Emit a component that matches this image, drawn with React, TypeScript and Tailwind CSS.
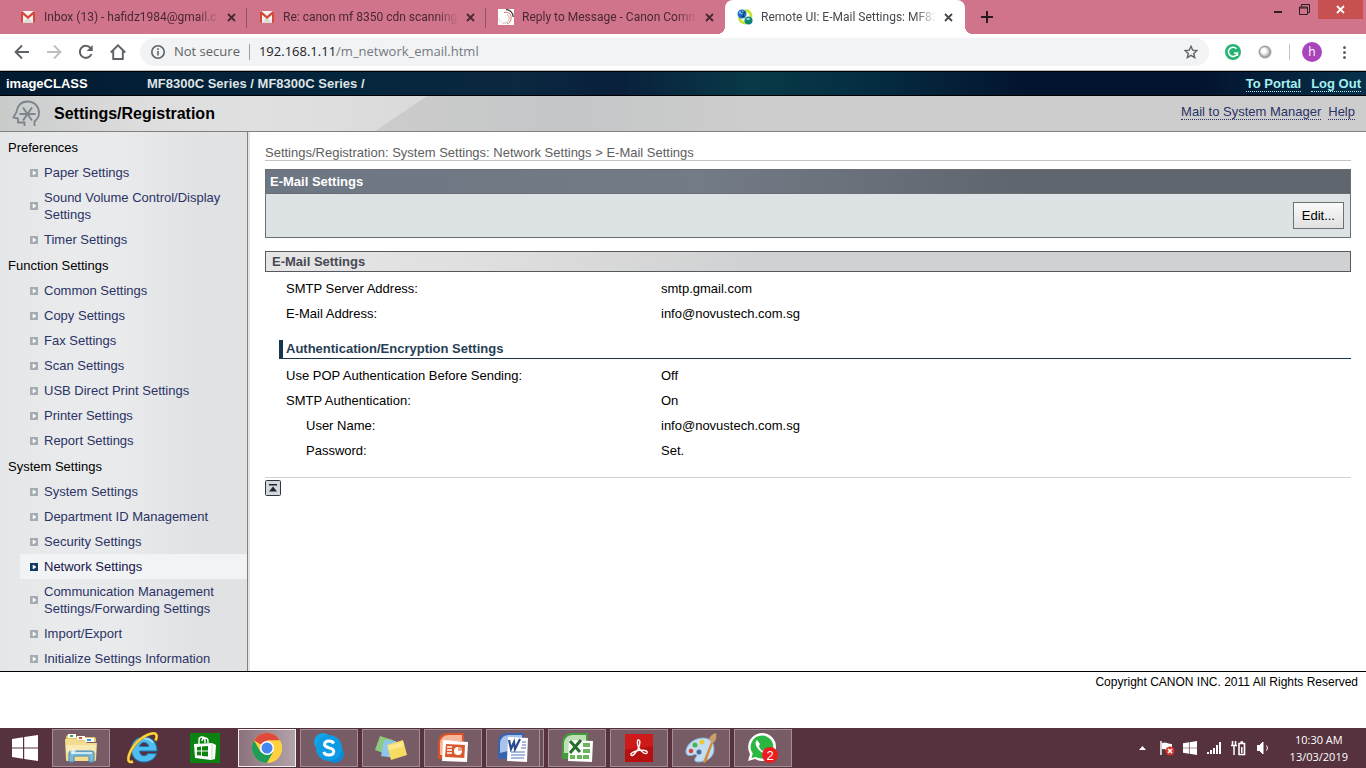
import type { ReactNode } from 'react';

interface NavItem {
  label: string;
  active?: boolean;
}

interface NavGroup {
  title: string;
  items: NavItem[];
}

interface SettingRow {
  label: string;
  value: string;
  nested?: boolean;
}

const navGroups: NavGroup[] = [
  {
    title: 'Preferences',
    items: [
      { label: 'Paper Settings' },
      { label: 'Sound Volume Control/Display Settings' },
      { label: 'Timer Settings' },
    ],
  },
  {
    title: 'Function Settings',
    items: [
      { label: 'Common Settings' },
      { label: 'Copy Settings' },
      { label: 'Fax Settings' },
      { label: 'Scan Settings' },
      { label: 'USB Direct Print Settings' },
      { label: 'Printer Settings' },
      { label: 'Report Settings' },
    ],
  },
  {
    title: 'System Settings',
    items: [
      { label: 'System Settings' },
      { label: 'Department ID Management' },
      { label: 'Security Settings' },
      { label: 'Network Settings', active: true },
      { label: 'Communication Management Settings/Forwarding Settings' },
      { label: 'Import/Export' },
      { label: 'Initialize Settings Information' },
    ],
  },
];

const emailRows: SettingRow[] = [
  { label: 'SMTP Server Address:', value: 'smtp.gmail.com' },
  { label: 'E-Mail Address:', value: 'info@novustech.com.sg' },
];

const authRows: SettingRow[] = [
  { label: 'Use POP Authentication Before Sending:', value: 'Off' },
  { label: 'SMTP Authentication:', value: 'On' },
  { label: 'User Name:', value: 'info@novustech.com.sg', nested: true },
  { label: 'Password:', value: 'Set.', nested: true },
];

/* ---------- favicons ---------- */

function GmailIcon() {
  return (
    <svg width="14" height="12" viewBox="0 0 14 12">
      <rect width="14" height="12" rx="1" fill="#f3f1ee" />
      <path d="M2 12 7 6l5 6z" fill="#dedad6" />
      <path d="M0 1.2C0 .4.8 0 1.5.3L7 5 12.500.3C13.200 0 14 .4 14 1.200V11q0 1-1 1h-1V3.800L7 8 2 3.800V12H1q-1 0-1-1z" fill="#d5483b" />
    </svg>
  );
}

function CanonIcon() {
  return (
    <svg width="16" height="16" viewBox="0 0 16 16" fill="none">
      <rect width="16" height="16" fill="#fff" />
      <path d="M8 .7C12 .7 15.300 4 15.300 8" stroke="#333" strokeWidth="1.200" />
      <path d="M6 3.500c5-1 8 2 7 7-.5 2-2 4-4 4.500" stroke="#e0766f" />
      <path d="M9 5.500c2 1 2.500 3 2 5S9 14.500 5 14" stroke="#c9a5a2" />
      <path d="M.8 9c.5 3 2 5 4.500 6" stroke="#ccc" strokeWidth=".7" />
    </svg>
  );
}

function RemoteIcon() {
  return (
    <svg width="16" height="16" viewBox="0 0 16 16" fill="none">
      <path d="M8 2c4-1 6 2 6 6M3 8c-1 4 2 6 6 6" stroke="#c3e534" strokeWidth="3" />
      <circle cx="5" cy="5" r="4.500" fill="#1d6fc4" />
      <path d="M2 3c2-2 4-1 5 0S5 6 4 5 2 5 2 3z" fill="#7cc3f3" />
      <circle cx="11.500" cy="11.500" r="4" fill="#0f8577" />
      <path d="M9 10c2-2 4-1 4 0s-3 2-4 0z" fill="#77d6c4" />
      <path d="m4 2 1 2 3-1-2 3 1 2-3-1" stroke="#0c3b77" />
    </svg>
  );
}

function CloseGlyph() {
  return (
    <svg width="9" height="9" viewBox="0 0 9 9">
      <path d="m1 1 7 7M8 1 1 8" stroke="currentColor" strokeWidth="1.800" />
    </svg>
  );
}

/* ---------- browser chrome ---------- */

interface TabProps {
  icon: ReactNode;
  title: string;
  active?: boolean;
  divider?: boolean;
}

function Tab({ icon, title, active, divider }: TabProps) {
  return (
    <div
      className={
        active
          ? 'relative flex h-full w-60 min-w-0 items-center rounded-t-lg bg-white pr-3 pl-3 text-[#45494d]'
          : 'relative flex h-full w-[239px] min-w-0 items-center pr-[11px] pl-3 text-[#4a2734]'
      }
    >
      {active && (
        <>
          <span className="absolute bottom-0 -left-2 size-2 bg-[radial-gradient(circle_at_0_0,#cf748a_8px,#fff_8px)]" />
          <span className="absolute -right-2 bottom-0 size-2 bg-[radial-gradient(circle_at_100%_0,#cf748a_8px,#fff_8px)]" />
        </>
      )}
      <span className="flex w-4 shrink-0 justify-center">{icon}</span>
      <span className="ml-2 flex-1 overflow-hidden mask-r-from-88% mask-r-to-100% font-[Roboto,sans-serif] text-xs whitespace-nowrap">{title}</span>
      <button type="button" aria-label="Close tab" className="ml-2 shrink-0">
        <CloseGlyph />
      </button>
      {divider && <span className="absolute top-2 right-0 h-5 w-px bg-[#8f5364]" />}
    </div>
  );
}

function TabStrip() {
  return (
    <div className="flex h-[34px] bg-[#cf748a] pl-2">
      <Tab icon={<GmailIcon />} title="Inbox (13) - hafidz1984@gmail.c" divider />
      <Tab icon={<GmailIcon />} title="Re: canon mf 8350 cdn scanning" divider />
      <Tab icon={<CanonIcon />} title="Reply to Message - Canon Comm" />
      <Tab icon={<RemoteIcon />} title="Remote UI: E-Mail Settings: MF83" active />
      <button type="button" aria-label="New tab" className="ml-4 text-[#2a1a20]">
        <svg width="12" height="12" viewBox="0 0 12 12">
          <path d="M6 0v12M0 6h12" stroke="currentColor" strokeWidth="2" />
        </svg>
      </button>
      <div className="mr-[3px] ml-auto flex h-[19px] items-center text-[#2f1d24]">
        <button type="button" aria-label="Minimize" className="flex h-full w-6 items-end justify-center pb-[6px]">
          <span className="h-[2px] w-2 bg-current" />
        </button>
        <button type="button" aria-label="Restore" className="flex w-7 justify-center">
          <svg width="11" height="11" viewBox="0 0 11 11" fill="none" stroke="currentColor">
            <path d="M2.500 2.500V.5h8v8h-2M.5 3h8v7.500h-8zM.5 4h8" />
          </svg>
        </button>
        <button type="button" aria-label="Close" className="flex h-full w-[45px] items-center justify-center bg-[#c75050] text-white">
          <CloseGlyph />
        </button>
      </div>
    </div>
  );
}

function Toolbar() {
  return (
    <div className="flex h-[37px] items-center border-b border-[#bcbcbc] bg-white pr-[18px] pl-[14px] text-[#5f6368]">
      <div className="flex items-center gap-4">
        <button type="button" aria-label="Back">
          <svg width="16" height="16" viewBox="0 0 16 16" fill="none" stroke="currentColor" strokeWidth="1.900">
            <path d="M15 8H2M8 1.500 1.600 8 8 14.500" />
          </svg>
        </button>
        <button type="button" aria-label="Forward" className="text-[#bdbfc1]">
          <svg width="16" height="16" viewBox="0 0 16 16" fill="none" stroke="currentColor" strokeWidth="1.900">
            <path d="M1 8h13M8 1.500 14.400 8 8 14.500" />
          </svg>
        </button>
        <button type="button" aria-label="Reload">
          <svg width="16" height="16" viewBox="0 0 16 16" fill="none" stroke="currentColor" strokeWidth="2">
            <path d="M13.500 10A6 6 0 1 1 12.500 4L14 5.500" />
            <path d="M14.700 1v6H8.700z" fill="currentColor" stroke="none" />
          </svg>
        </button>
        <button type="button" aria-label="Home">
          <svg width="16" height="16" viewBox="0 0 16 16" fill="none" stroke="currentColor" strokeWidth="1.900">
            <path d="M.8 8.500 8 1.300l7.200 7.200M3.200 7v8h9.600V7" />
          </svg>
        </button>
      </div>
      <div className="ml-[14px] flex h-7 flex-1 items-center rounded-full bg-[#f1f3f4] pr-[11px] pl-[11px] text-[13px]">
        <svg width="14" height="14" viewBox="0 0 14 14" fill="none" stroke="currentColor" strokeWidth="1.600">
          <circle cx="7" cy="7" r="6.200" />
          <path d="M7 6v4.500M7 3.300v1.600" />
        </svg>
        <span className="ml-[9px] whitespace-nowrap">Not secure</span>
        <span className="mx-[9px] h-4 w-px bg-[#9aa0a6]" />
        <div className="flex-1 text-[#757a7f]">
          <span className="text-[#202124]">192.168.1.11</span>/m_network_email.html
        </div>
        <button type="button" aria-label="Bookmark this page">
          <svg width="14" height="14" viewBox="0 0 14 14" fill="none" stroke="currentColor" strokeWidth="1.400">
            <path d="m7 1.300 1.700 3.900 4.200.4-3.200 2.800 1 4.200L7 10.400l-3.700 2.200 1-4.200L1.100 5.600l4.200-.4z" />
          </svg>
        </button>
      </div>
      <div className="ml-4 flex items-center">
        <svg width="16" height="16" viewBox="0 0 16 16">
          <circle cx="8" cy="8" r="8" fill="#27b376" />
          <path d="M11.500 4.800A4.600 4.600 0 1 0 12.500 9H9M12.400 9v3" fill="none" stroke="#fff" strokeWidth="1.500" />
        </svg>
        <svg width="14" height="14" viewBox="0 0 14 14" className="ml-[17px]">
          <circle cx="7" cy="7" r="6.500" fill="#a3a3a3" />
          <circle cx="6.500" cy="6.500" r="4.600" fill="#d2d2d2" />
          <circle cx="6" cy="6" r="3" fill="#fff" />
        </svg>
        <span className="mr-3 ml-[17px] h-4 w-px bg-[#c4c6c8]" />
        <button type="button" aria-label="Profile" className="flex size-5 items-center justify-center rounded-full bg-[#a845bb] text-xs leading-none text-white">
          h
        </button>
        <button type="button" aria-label="Menu" className="ml-[19px] flex flex-col gap-[2px] px-[2px]">
          <span className="size-[3px] rounded-full bg-current" />
          <span className="size-[3px] rounded-full bg-current" />
          <span className="size-[3px] rounded-full bg-current" />
        </button>
      </div>
    </div>
  );
}

/* ---------- remote UI page ---------- */

function DeviceBar() {
  return (
    <div className="flex h-[25px] items-center border-y border-black bg-[linear-gradient(90deg,#021a30_0%,#04263d_25%,#0a2840_38%,#0a1f3c_45%,#083946_55%,#052e42_63%,#03142e_75%,#03142e_88%,#08304a_100%)] pr-[5px] pl-[6px] text-[13px] font-bold">
      <span className="w-[141px] text-white">imageCLASS</span>
      <span className="text-[#dfe3e6]">MF8300C Series / MF8300C Series /</span>
      <div className="ml-auto flex gap-[10px] leading-[15px] text-[#a5f0f2]">
        <a href="#portal" className="border-b border-dotted border-[#a5f0f2]">To Portal</a>
        <a href="#logout" className="border-b border-dotted border-[#a5f0f2]">Log Out</a>
      </div>
    </div>
  );
}

function PageHeader() {
  return (
    <div className="relative flex h-9 items-center border-b border-[#808080] bg-[linear-gradient(90deg,#c9caca_0px,#dedede_150px,#e0e0e0_260px,#dadada_430px)] pr-[11px] pl-3">
      <div className="absolute inset-y-0 right-0 left-[375px] bg-[linear-gradient(90deg,#cccccc_0px,#c4c6c7_190px,#cdcdcd_380px)] [clip-path:polygon(0_100%,52px_0,100%_0,100%_100%)]" />
      <svg width="28" height="27" viewBox="0 0 28 27" fill="none" stroke="#7b858c" strokeWidth="1.800" className="relative">
        <path d="M12.500 26v-3.500H6V18.500L1.500 17.500 4.500 12C5 6 9 1.500 15.500 1.500c7 0 11.500 5 11.500 11.500 0 4-1.500 6-4.500 8.500V26" />
        <path d="M7.500 14h16M11 7.500l9 13M20 7.500l-9 13" strokeWidth="2" />
      </svg>
      <h1 className="relative ml-[14px] text-base font-bold">Settings/Registration</h1>
      <div className="relative mb-[2px] ml-auto flex gap-[7px] text-[13px] leading-[14px] text-[#2b3366]">
        <a href="#mail" className="border-b border-dotted border-[#2b3366]">Mail to System Manager</a>
        <a href="#help" className="border-b border-dotted border-[#2b3366]">Help</a>
      </div>
    </div>
  );
}

function Sidebar() {
  return (
    <nav className="w-[248px] shrink-0 border-r border-[#808080] bg-[linear-gradient(90deg,#e4e6e8_0px,#e9eaeb_60px,#e9eaeb_120px,#e0e2e4_200px,#e0e2e4_247px)] pt-[2px] leading-[17px]">
      {navGroups.map((group) => (
        <section key={group.title}>
          <h2 className="h-[26px] pt-[5px] pl-2 text-black">{group.title}</h2>
          <ul className="pl-5">
            {group.items.map((item) => (
              <li key={item.label} className={item.active ? 'bg-[#f2f3f5]' : ''}>
                <a
                  href="#settings"
                  className={
                    item.active
                      ? 'flex items-center gap-[6px] py-1 pr-4 pl-[10px] text-[#15154a]'
                      : 'flex items-center gap-[6px] py-1 pr-4 pl-[10px] text-[#2b3366]'
                  }
                >
                  <svg width="8" height="8" viewBox="0 0 8 8" className="shrink-0">
                    <rect width="8" height="8" fill={item.active ? '#123a66' : '#a3acb1'} />
                    <path d="M3 2v4l3-2z" fill="#fff" stroke="#fff" strokeWidth=".6" />
                  </svg>
                  {item.label}
                </a>
              </li>
            ))}
          </ul>
        </section>
      ))}
    </nav>
  );
}

function SettingsTable({ rows }: { rows: SettingRow[] }) {
  return (
    <table className="w-full table-fixed text-left leading-[17px]">
      <tbody>
        {rows.map((row) => (
          <tr key={row.label}>
            <th scope="row" className={row.nested ? 'w-[396px] py-1 pl-[41px] font-normal' : 'w-[396px] py-1 pl-[21px] font-normal'}>
              {row.label}
            </th>
            <td className="py-1">{row.value}</td>
          </tr>
        ))}
      </tbody>
    </table>
  );
}

function Content() {
  return (
    <main className="min-w-0 flex-1 border-l-2 border-[#e3e5e6] bg-white pt-[13px] pr-[15px] pl-[15px]">
      <p className="border-b border-[#c4c4c4] leading-[15px] text-[#5e5e5e]">
        Settings/Registration: System Settings: Network Settings &gt; E-Mail Settings
      </p>

      <section className="mt-2 border border-[#6a6f73]">
        <h2 className="bg-[linear-gradient(90deg,#6d7683,#737b86_40%,#5f656d_70%,#5f656d)] pl-1 leading-[23px] font-bold text-white">E-Mail Settings</h2>
        <div className="flex justify-end border-t border-[#6a6f73] bg-[#dde2e5] px-[6px] py-2">
          <button type="button" className="h-[27px] border border-[#707070] bg-linear-to-b from-[#fafafa] to-[#e0e0e0] px-2 text-black">
            Edit...
          </button>
        </div>
      </section>

      <h3 className="mt-[13px] mb-1 border border-[#55585f] bg-[linear-gradient(90deg,#e6e6e6_0%,#dfdfdf_20%,#d0d1d2_45%,#d0d1d2_100%)] pl-[6px] leading-[19px] font-bold text-[#474a54]">
        E-Mail Settings
      </h3>
      <SettingsTable rows={emailRows} />

      <h4 className="mt-[14px] mb-1 ml-[14px] border-b border-l-4 border-b-[#1b3448] border-l-[#143650] pl-[3px] leading-[18px] font-bold text-[#284055]">
        Authentication/Encryption Settings
      </h4>
      <SettingsTable rows={authRows} />

      <div className="mt-[14px] border-t border-[#d0d0d0] pt-[2px]">
        <a href="#top" aria-label="Back to top" className="block size-4">
          <svg width="16" height="16" viewBox="0 0 16 16">
            <rect x=".5" y=".5" width="15" height="15" rx="1" fill="#d3d6dc" stroke="#30333f" />
            <path d="M4 4h8v1.500H4zM8 6.500l4 5H4z" fill="#20232e" />
          </svg>
        </a>
      </div>
    </main>
  );
}

/* ---------- taskbar ---------- */

function WindowsLogo({ size }: { size: number }) {
  return (
    <svg width={size} height={size} viewBox="0 0 26 26" fill="#fff">
      <path d="M0 4 11 2.300V12.400H0zM12.200 2.100 26 0v12.400H12.200zM0 13.600h11v10.100L0 22zM12.200 13.600H26V26l-13.800-2.100z" />
    </svg>
  );
}

function FolderIcon() {
  return (
    <svg width="32" height="30" viewBox="0 0 32 30">
      <path d="M1 4q0-2 2-2h7l2 2h17q2 0 2 2v3H1z" fill="#e6c768" />
      <path d="M3 1h8v4H3zM12 3h8v4h-8zM20 5h9v4h-9z" fill="#fff" />
      <path d="M5 2h3v2H5z" fill="#3fa34d" />
      <path d="M14 4h3v2h-3z" fill="#d34c3c" />
      <path d="M22 6h4v2h-4z" fill="#3d9bd5" />
      <path d="M0 6h12l2 2h6l2 2h10l-1 17q0 1-1 1H2q-1 0-1-1z" fill="#f3dc8e" />
      <path d="M1 12h30l-.5 8H1.500z" fill="#f9eab4" />
      <path d="M4 29V20q0-2 2-2h21q2 0 2 2v9h-5v-5q0-1-1-1H10q-1 0-1 1v5z" fill="#7db9da" stroke="#4a88ae" />
      <path d="M6 20h21" stroke="#c8e8f6" strokeWidth="2" />
      <path d="M8 15v6M5 18h6" stroke="#fff" />
    </svg>
  );
}

function InternetExplorerIcon() {
  return (
    <svg width="32" height="32" viewBox="0 0 32 32">
      <path
        d="M30 19H12.500c.3 3 2 4.800 4.500 4.800 1.800 0 3-.7 3.800-2.200H29.500C28 26.800 23 30 17 30 9.500 30 4.500 25 4.500 17.500S9.500 5 17 5c8 0 13 5.500 13 14zM12.600 14.500h9c-.3-2.500-2-4-4.500-4s-4.200 1.500-4.500 4z"
        fill="#4fbdf0"
        stroke="#1678b8"
      />
      <path d="M7 14c1-4 5-7.500 10-7.500 4 0 7 1.500 9 4" fill="none" stroke="#b2e5fb" strokeWidth="1.500" />
      <path d="M6 29.500c-5 2-6-2-3-9C7 11 17 3 25 1.500c5-1 5.500 3 3.500 7" fill="none" stroke="#c98d10" strokeWidth="3" />
      <path d="M6 29.500c-5 2-6-2-3-9C7 11 17 3 25 1.500c5-1 5.500 3 3.500 7" fill="none" stroke="#fbd648" strokeWidth="2" />
    </svg>
  );
}

function StoreIcon() {
  return (
    <svg width="30" height="30" viewBox="0 0 30 30">
      <rect width="30" height="30" fill="#0c8310" />
      <path d="M9 11V7q0-3 3-3t3 3v3M12 8q0-3 3-3t3 3v2" fill="none" stroke="#fff" strokeWidth="1.400" />
      <path d="m4 11 18-1 4 2-1 14-4 1-16-2z" fill="#fff" />
      <path d="M22 10v17" stroke="#a9d3aa" strokeWidth=".7" />
      <path d="m7 14 4-.4v4H7zM12 13.500l6-.5v4.600h-6zM7 18.600h4v4l-4-.4zM12 18.600h6v5l-6-.7z" fill="#0c8310" />
    </svg>
  );
}

function ChromeIcon() {
  return (
    <svg width="30" height="30" viewBox="0 0 30 30">
      <circle cx="15" cy="15" r="15" fill="#fdd13f" />
      <path d="M15 15 2 7.500A15 15 0 0 1 28 7.500H15z" fill="#e04a3a" />
      <path d="M2 7.500A15 15 0 0 0 15 30l6.500-11.300L15 22 8.500 18.800z" fill="#1f9d58" />
      <path d="M15 7.500h13A15 15 0 0 1 15 30l6.500-11.300z" fill="#fdd13f" />
      <circle cx="15" cy="15" r="7" fill="#fff" />
      <circle cx="15" cy="15" r="5.500" fill="#4587f0" />
    </svg>
  );
}

function SkypeIcon() {
  return (
    <svg width="30" height="30" viewBox="0 0 30 30">
      <circle cx="9" cy="9" r="9" fill="#12a5ea" />
      <circle cx="21" cy="21" r="9" fill="#0a8ad8" />
      <circle cx="15" cy="15" r="13" fill="#0f9be4" />
      <path d="M19.800 10.500c-1-2-3-2.500-5-2.500-2.500 0-4.300 1.200-4.300 3.300 0 4.700 9.200 2.400 9.200 7 0 2.400-2 3.700-4.700 3.700-2.400 0-4.600-1-5.200-3.200" fill="none" stroke="#fff" strokeWidth="3" />
    </svg>
  );
}

function NotesIcon() {
  return (
    <svg width="32" height="26" viewBox="0 0 32 26">
      <path d="m5 1 13 4-4 15L0 15z" fill="#8ccb7f" />
      <path d="m9 5 12 1-1 17-14-2z" fill="#8fc6ee" />
      <path d="m12 10 16-5 4 15-16 5z" fill="#f7dc63" />
      <path d="m13 11 15-4 1 4-15 4z" fill="#fbe991" />
    </svg>
  );
}

function PowerPointIcon() {
  return (
    <svg width="31" height="30" viewBox="0 0 31 30">
      <path d="M0 26V9Q1 0 10 0h16v26z" fill="#d5532a" />
      <path d="M2 22V10Q3 2 11 2h13v6H8v14z" fill="#f5b79b" />
      <path d="m5 7 25 2-1 20-25-1z" fill="#fff" />
      <path d="m8 11 19 1-.7 13L7 24z" fill="#d9582e" />
      <circle cx="20" cy="18" r="4" fill="#fff" />
      <path d="M20 18v-4a4 4 0 0 1 4 4z" fill="#f3a487" />
      <path d="M9 14h5M9 17h5M9 20h5" stroke="#fff" strokeWidth="1.500" />
    </svg>
  );
}

function WordIcon() {
  return (
    <svg width="31" height="30" viewBox="0 0 31 30">
      <path d="M0 26V9Q1 0 10 0h16v26z" fill="#3a63ad" />
      <path d="M2 20V10Q3 2 11 2h13v4H10v12z" fill="#a9c2ea" />
      <path d="m10 4 20 1-1 24-20-1z" fill="#fff" />
      <path d="M24 9h4M24 12h4M23 15h5M13 19h14M13 22h14M13 25h13" stroke="#5579bb" strokeWidth="1.200" />
      <path d="m11 7 2 9 3-7 1 7 5-10" fill="none" stroke="#2a4b91" strokeWidth="2.200" />
    </svg>
  );
}

function ExcelIcon() {
  return (
    <svg width="31" height="30" viewBox="0 0 31 30">
      <path d="M0 26V9Q1 0 10 0h16v26z" fill="#459a3e" />
      <path d="M2 20V10Q3 2 11 2h13v6H8v12z" fill="#bfe0b6" />
      <path d="m7 7 24 1-1 21-24-1z" fill="#fff" />
      <path d="M21 10h7v4h-7zM21 16h7v4h-7zM15 22h5v4h-5zM21 22h6v4h-6zM8 22h5v4H8z" fill="#6cb45c" />
      <path d="m8 8 10 11M19 7 8 20" stroke="#276d2b" strokeWidth="3" />
    </svg>
  );
}

function AcrobatIcon() {
  return (
    <svg width="28" height="28" viewBox="0 0 28 28">
      <rect width="28" height="28" fill="#b80f10" />
      <path d="M0 0h28v12L0 16z" fill="#ce1a19" />
      <path d="M13 6c2-1 3 3 0 9-3 5-6 8-7 6s4-4 9-5c5 0 8 1 7 3s-6-1-8-5c-2-3-2-7-1-8z" fill="none" stroke="#fff" strokeWidth="1.400" />
    </svg>
  );
}

function PaintIcon() {
  return (
    <svg width="32" height="31" viewBox="0 0 32 31">
      <path d="M1 20C0 12 9 5 18 5c8 0 11 5 11 11 0 9-8 13-16 13-4 0-4-3-2-5s0-3-3-2-6 1-7-2z" fill="#c3ddf1" stroke="#7fb1d9" />
      <circle cx="6" cy="18" r="2.300" fill="#d6453c" />
      <circle cx="10" cy="12" r="2.500" fill="#4fb04c" />
      <circle cx="17" cy="9" r="2.500" fill="#efc53b" />
      <circle cx="14" cy="19" r="2.500" fill="#486d9b" />
      <path d="m26 9 2 1-7 19q-2 2-3 0z" fill="#d88a3a" />
      <path d="M24 7c0-3 3-6 7-7 1 4 0 8-3 10z" fill="#c9a06a" />
    </svg>
  );
}

function WhatsAppIcon() {
  return (
    <svg width="32" height="31" viewBox="0 0 32 31">
      <path d="M15 0a14 14 0 0 1 0 28q-4 0-7-2l-7 2 2-7A14 14 0 0 1 15 0z" fill="#fff" />
      <path d="M15 2.500a11.500 11.500 0 1 1-6 21.400L4.500 25l1.200-4.400A11.500 11.500 0 0 1 15 2.500z" fill="#2cb742" />
      <path d="M10 7c-3 3-1 7 3 11 3 3 7 4 9 1l-4-3-2 2c-2-1-3-2-4-5l1-2z" fill="#fff" />
      <circle cx="23" cy="22" r="8" fill="#ee1c1c" />
      <text x="23" y="27" textAnchor="middle" fontSize="13" fill="#fff" fontFamily="Liberation Sans, sans-serif">2</text>
    </svg>
  );
}

interface TaskButtonProps {
  label: string;
  children: ReactNode;
  state?: 'idle' | 'open' | 'active';
}

function TaskButton({ label, children, state = 'open' }: TaskButtonProps) {
  const styles = {
    idle: 'flex w-[58px] items-center justify-center',
    open: 'flex w-[58px] items-center justify-center border border-[#a38f98] bg-[#775c66]',
    active: 'flex w-[58px] items-center justify-center border border-[#f2edef] bg-linear-to-r from-[#8b727c] to-[#b3a2a9]',
  };
  return (
    <button type="button" aria-label={label} className={styles[state]}>
      {children}
    </button>
  );
}

function Tray() {
  return (
    <div className="ml-auto flex items-center pr-[18px] font-['Open_Sans',sans-serif] text-white">
      <svg width="7" height="4" viewBox="0 0 7 4"><path d="M3.500 0 7 4H0z" fill="#fff" /></svg>
      <svg width="15" height="15" viewBox="0 0 15 15" className="ml-[14px]">
        <path d="M1 0v14" stroke="#fff" strokeWidth="1.500" />
        <path d="M2 2q3-1 5 0t5 1v6q-3 1-5 0T2 8z" fill="#fff" />
        <circle cx="10" cy="10" r="4.500" fill="#d8352b" />
        <path d="m8 8 4 4M12 8l-4 4" stroke="#fff" strokeWidth="1.500" />
      </svg>
      <span className="ml-2"><WindowsLogo size={14} /></span>
      <svg width="15" height="12" viewBox="0 0 15 12" fill="#fff" className="ml-[10px]">
        <path d="M0 10h2v2H0zM3 8h2v4H3zM6 6h2v6H6zM9 3h2v9H9zM12 0h2v12h-2z" />
      </svg>
      <svg width="15" height="15" viewBox="0 0 15 15" fill="none" stroke="#fff" className="ml-[9px]">
        <path d="M1.500 0v4M4.500 0v4M0 4.500h6M3 5v9" strokeWidth="1.500" />
        <path d="M8 2.500h5.500v11H8zM9.500 1h2.500" strokeWidth="1.600" />
        <path d="M10 6h1.500v6H10z" fill="#fff" stroke="none" />
      </svg>
      <svg width="13" height="14" viewBox="0 0 13 14" fill="none" stroke="#fff" className="ml-[11px]">
        <path d="M0 4.500h2.500L6 1v12L2.500 9.500H0z" fill="#fff" />
        <path d="M9.500 4.500q2 2.500 0 5" />
      </svg>
      <div className="ml-5 text-center text-[11px] leading-[17px] whitespace-nowrap">
        <div>10:30 AM</div>
        <div>13/03/2019</div>
      </div>
    </div>
  );
}

function Taskbar() {
  return (
    <div className="flex h-10 bg-[#56323e] py-px">
      <button type="button" aria-label="Start" className="mr-[2px] flex w-[50px] items-center justify-center">
        <WindowsLogo size={26} />
      </button>
      <div className="flex gap-1">
        <TaskButton label="File Explorer"><FolderIcon /></TaskButton>
        <TaskButton label="Internet Explorer" state="idle"><InternetExplorerIcon /></TaskButton>
        <TaskButton label="Store" state="idle"><StoreIcon /></TaskButton>
        <TaskButton label="Chrome" state="active"><ChromeIcon /></TaskButton>
        <TaskButton label="Skype"><SkypeIcon /></TaskButton>
        <TaskButton label="Sticky Notes"><NotesIcon /></TaskButton>
        <TaskButton label="PowerPoint"><PowerPointIcon /></TaskButton>
        <div className="flex">
          <button type="button" aria-label="Word" className="flex w-[54px] items-center justify-center border border-[#a38f98] bg-[#775c66]">
            <WordIcon />
          </button>
          <span className="w-1 border-y border-r border-[#a38f98] bg-[#6b4e59]" />
        </div>
        <TaskButton label="Excel"><ExcelIcon /></TaskButton>
        <TaskButton label="Acrobat Reader"><AcrobatIcon /></TaskButton>
        <TaskButton label="Paint"><PaintIcon /></TaskButton>
        <TaskButton label="WhatsApp"><WhatsAppIcon /></TaskButton>
      </div>
      <Tray />
    </div>
  );
}

export default function App() {
  return (
    <div className="flex min-h-screen flex-col bg-white font-['Liberation_Sans',Arial,sans-serif] text-[13px] text-black">
      <header className="font-['Open_Sans',sans-serif]">
        <TabStrip />
        <Toolbar />
      </header>
      <DeviceBar />
      <PageHeader />
      <div className="flex border-b border-black">
        <Sidebar />
        <Content />
      </div>
      <footer className="flex-1 pt-[2px] pr-2 text-right text-xs leading-4">
        Copyright CANON INC. 2011 All Rights Reserved
      </footer>
      <Taskbar />
    </div>
  );
}
